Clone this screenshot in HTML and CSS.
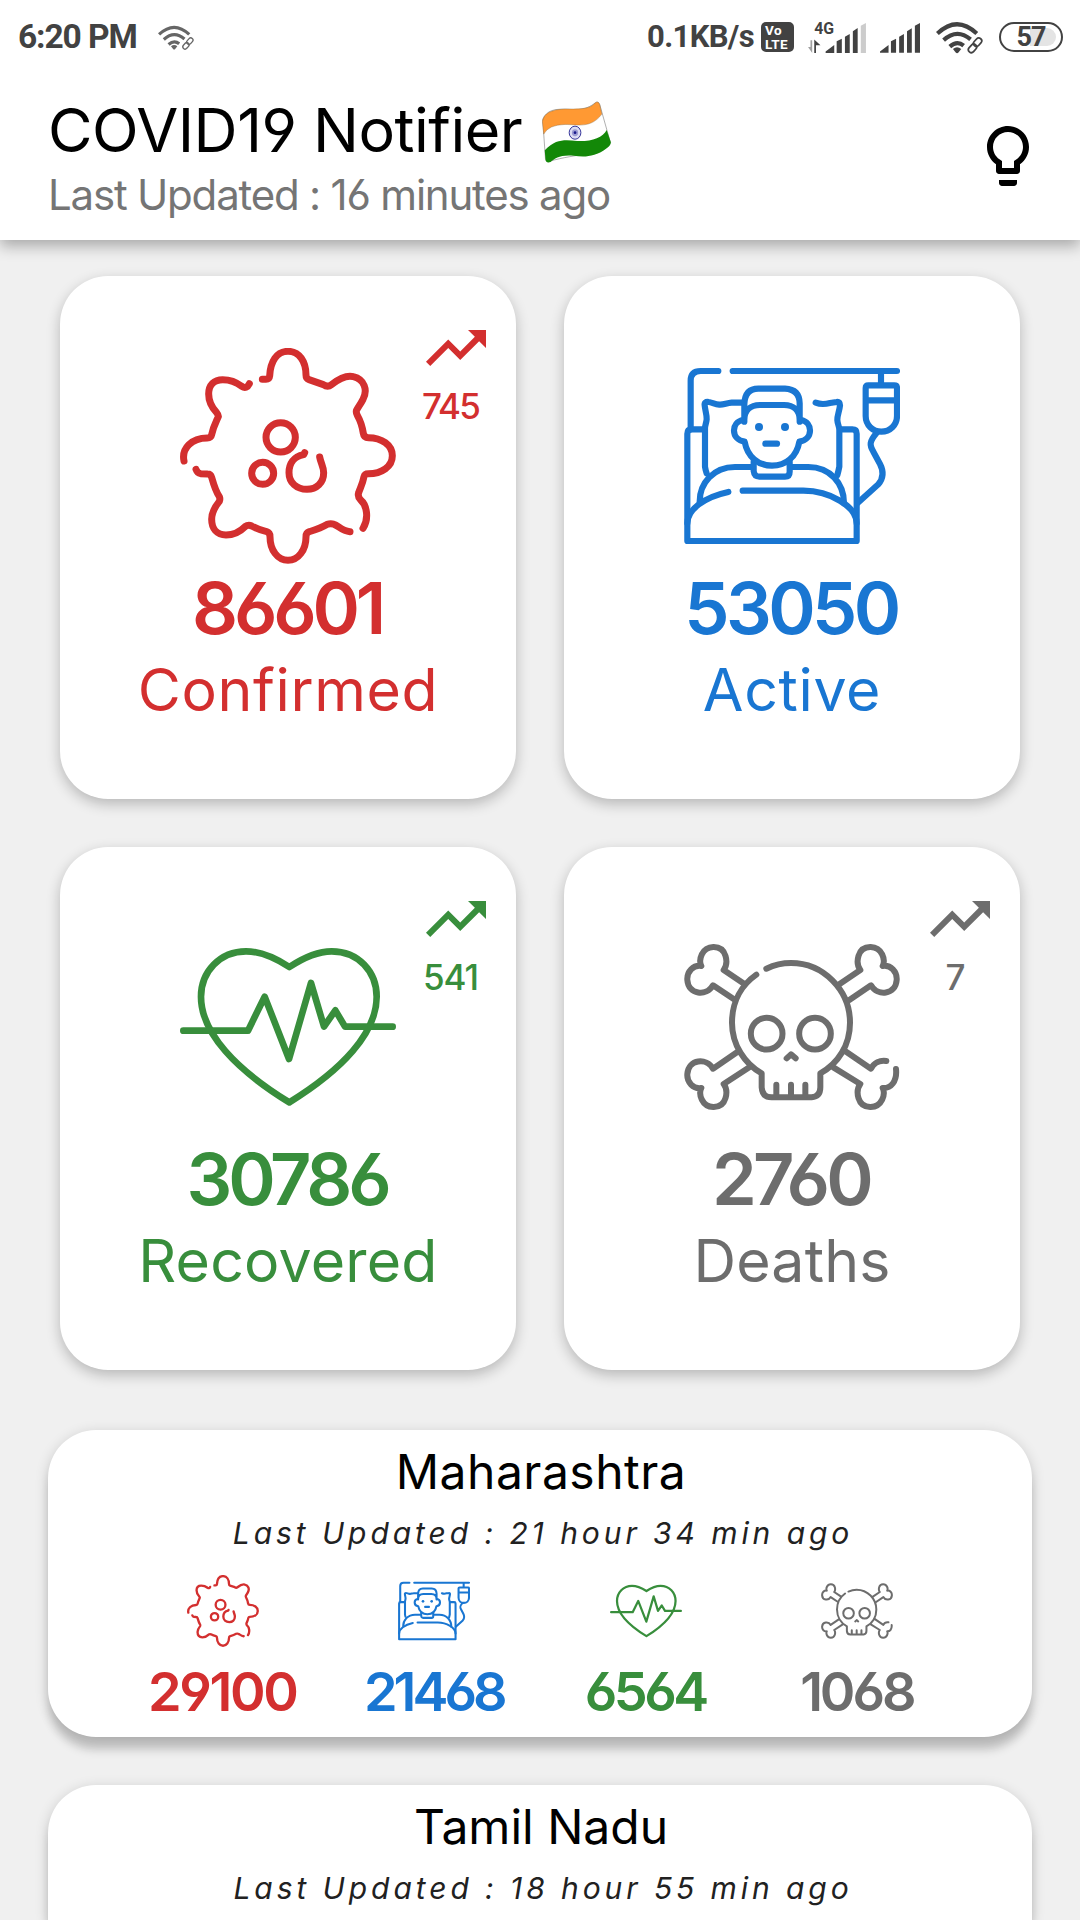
FILE: index.html
```html
<!DOCTYPE html>
<html lang="en">
<head>
<meta charset="utf-8">
<title>COVID19 Notifier</title>
<link rel="stylesheet" href="styles.css">
</head>
<body>
<svg class="sprite" aria-hidden="true">
  <symbol id="virus" viewBox="60 84 648 648">
    <g fill="none" stroke="currentColor" stroke-width="21" stroke-linecap="round" stroke-linejoin="round">
      <path d="M307 178H318Q328 178 329 168C331 125 350 94 384 94C418 94 438 125 438 165Q438 176 447 179L490 194Q503 203 514 194C545 170 565 166 580 170C613 178 624 210 609 238C602 252 594 262 590 270Q587 277 592 286C600 300 606 315 610 340Q612 353 625 353C665 353 697 375 697 407C697 440 665 461 625 461Q614 461 612 470C608 492 600 505 596 518Q592 530 602 540C620 555 628 595 609 625"/>
      <path d="M570 635C545 633 535 617 522 613Q512 609 502 613C482 625 468 629 448 635Q438 638 438 650C438 690 415 721 384 721C353 721 330 690 330 650Q330 638 320 635C300 631 290 626 275 618Q265 613 255 620C235 640 215 645 198 645C170 645 155 625 155 598C155 575 165 560 178 544Q181 537 178 530C168 515 162 497 155 472Q152 462 143 462L122 461Q112 459 108 448"/>
      <path d="M72 423C64 385 95 354 142 354Q153 354 155 344C160 320 166 310 175 290Q176 285 170 278C155 262 146 240 146 222C146 195 162 179 188 179C215 179 230 187 245 199Q260 208 268 191"/>
      <circle cx="362" cy="352" r="44"/>
      <circle cx="308" cy="460" r="33"/>
      <path d="M434 398L431 404C400 410 387 432 387 458C387 488 410 508 441 508C470 508 491 488 491 458C491 440 483 432 479 411"/>
    </g>
  </symbol>
  <symbol id="bed" viewBox="72 24 648 648">
    <g fill="none" stroke="currentColor" stroke-width="18.5" stroke-linecap="round" stroke-linejoin="round">
      <path d="M92 268V122Q92 93 122 93H175M218 93H711M663 93V130"/>
      <path d="M625 136H703Q711 136 711 144V228C711 255 690 275 664 275C638 275 617 255 617 228V144Q617 136 625 136ZM617 181H711"/>
      <path d="M649 280C628 305 628 315 640 335L660 372C672 395 670 415 655 433L592 490"/>
      <path d="M130 268H95Q82 268 82 281V603H590V281Q590 268 577 268H542"/>
      <path d="M248 188H215C200 189 190 195 178 194C165 193 155 187 146 186Q132 184 134 196C135 210 141 225 140 238C139 250 135 255 135 265V380Q137 392 140 400"/>
      <path d="M467 188C485 195 495 193 510 189L530 186Q540 184 540 196C538 215 531 228 532 240C533 255 538 258 538 270V380Q535 395 532 405"/>
      <path d="M119 485C119 430 160 381 225 381H275M395 381H445C510 381 552 430 552 490"/>
      <path d="M281 365V393Q283 410 298 410H375Q389 410 389 395V365"/>
      <path d="M205 456C130 472 82 510 82 550M248 452H430C510 452 590 500 590 550"/>
      <path d="M253 245V192Q255 146 295 146H375Q418 148 419 190V245M253 240C253 212 270 195 300 195H372C402 195 419 212 419 240"/>
      <path d="M250 240C212 245 212 300 254 305C262 350 295 377 336 377C378 377 410 350 418 305C460 300 460 245 422 240"/>
      <path d="M316 311H351"/>
    </g>
    <circle cx="297" cy="261" r="12" fill="currentColor"/>
    <circle cx="375" cy="261" r="12" fill="currentColor"/>
  </symbol>
  <symbol id="heart" viewBox="60 117 648 648">
    <g fill="none" stroke="currentColor" stroke-width="20" stroke-linecap="round" stroke-linejoin="round">
      <path d="M388 261C340 230 300 214 258 214C180 214 123 275 123 350C123 460 230 570 388 667C545 570 650 460 650 350C650 275 595 214 515 214C475 214 435 230 388 261Z"/>
      <path d="M70 452H264L314 350L387 537L453 309L492 440L526 391L555 440H698"/>
    </g>
  </symbol>
  <symbol id="skull" viewBox="72 117 648 648">
    <g fill="none" stroke="currentColor" stroke-width="18" stroke-linecap="round" stroke-linejoin="round">
      <path d="M289 284C245 315 216 365 216 428C216 495 255 552 305 580V622Q307 652 335 652H455Q481 650 481 622V580C535 550 570 495 570 428C570 330 490 249 393 249C365 249 340 256 319 266"/>
      <circle cx="320" cy="461" r="47.500"/>
      <circle cx="465" cy="461" r="47.500"/>
      <path d="M380 535L393 523L407 535M349 614V645M393 614V645M436 614V645"/>
      <path d="M250 310L191 270C206 250 201 200 160 201C125 202 115 240 124 258C100 254 80 275 82 300C85 345 140 350 159 316L222 358"/>
      <path d="M539 312L601 270C586 250 591 200 632 201C667 202 677 240 668 258C692 254 712 275 710 300C707 345 652 350 633 316L568 360"/>
      <path d="M268 562L191 612C206 632 201 682 160 681C125 680 115 642 124 624C100 628 80 607 82 582C85 537 140 532 159 566L232 516"/>
      <path d="M520 562L601 612C586 632 591 682 632 681C667 680 677 642 668 624C692 626 712 605 708 567M554 512L633 566C642 548 660 540 679 543"/>
    </g>
  </symbol>
  <symbol id="trend" viewBox="0 0 24 24">
    <path fill="currentColor" d="M16 6l2.290 2.290-4.880 4.880-4-4L2 16.590 3.410 18l6-6 4 4 6.300-6.290L22 12V6z"/>
  </symbol>
  <symbol id="wifi" viewBox="1150 60 136 95">
    <g fill="none" stroke="currentColor" stroke-width="12">
      <path d="M1154 96Q1211 42 1268 96M1172 115Q1211 80 1250 113M1190 134Q1211 115 1230 131"/>
      <g stroke-width="5" transform="rotate(-48 1263 130)">
        <rect x="1238" y="122" width="27" height="17" rx="8.500"/>
        <rect x="1261" y="121" width="27" height="17" rx="8.500"/>
      </g>
    </g>
    <path fill="currentColor" d="M1199 141Q1211 130 1223 141L1215 151Q1211 155 1207 151Z"/>
  </symbol>
</svg>

<div class="status-bar">
  <span class="clock">6:20 PM</span>
  <svg class="wifi-small"><use href="#wifi"/></svg>
  <span class="speed">0.1KB/s</span>
  <span class="volte"><span class="vo">Vo</span><span class="lte">LTE</span></span>
  <svg class="signal-data" viewBox="779 40 168 112">
    <text x="797" y="94" class="net">4G</text>
    <path fill="#a0a0a0" d="M786 113H791V150L779 133H786Z"/>
    <path fill="#424242" d="M797 150H802V128H815L797 111Z"/>
    <path fill="#424242" d="M830 150V146L855 127V150ZM862 150V116L877 109V150ZM886 150V103L900 95V150ZM909 150V87L923 78V150Z"/>
    <path fill="#ccc" d="M932 150V71L947 63V150Z"/>
  </svg>
  <svg class="signal" viewBox="830 40 117 112">
    <path fill="#424242" d="M830 150V146L855 127V150ZM862 150V116L877 109V150ZM886 150V103L900 95V150ZM909 150V87L923 78V150ZM932 150V71L947 63V150Z"/>
  </svg>
  <svg class="wifi"><use href="#wifi"/></svg>
  <span class="battery"><span class="charge"></span><span class="level">57</span></span>
</div>

<header class="app-bar">
  <div class="titles">
    <h1 class="title">COVID19 Notifier
      <svg class="flag" viewBox="8 303 202 180">
        <path fill="#fff" stroke="#666" stroke-width="1.500" d="M10 356C25 322 60 326 100 328C135 328 150 318 163 308Q172 302 176 314L207 424C180 460 110 455 30 478Q20 483 18 470Z"/>
        <path fill="#ff9933" stroke="#7a5a30" stroke-width="1" d="M9 362Q15 327 75 326C110 326 145 329 162 309Q172 301 176 314L182 341C150 384 110 371 75 371Q27 372 13 399Z"/>
        <path fill="#138808" d="M16 446C50 410 80 417 110 419C150 421 185 410 196 387L208 422Q209 431 195 441C160 467 130 466 100 462C62 458 45 470 33 480Q20 485 18 472Z"/>
        <ellipse cx="104" cy="395" rx="17" ry="19" fill="#dcdcf2" stroke="#1a1a8c" stroke-width="2.500"/>
        <ellipse cx="104" cy="395" rx="9" ry="10" fill="#9a9ad2"/>
        <circle cx="104" cy="395" r="4" fill="#1a1a8c"/>
      </svg>
    </h1>
    <p class="subtitle">Last Updated : 16 minutes ago</p>
  </div>
  <svg class="bulb" viewBox="0 0 24 24"><path d="M9 21c0 .550.450 1 1 1h4c.550 0 1-.450 1-1v-1H9v1zm3-19C8.140 2 5 5.140 5 9c0 2.380 1.190 4.470 3 5.740V17c0 .550.450 1 1 1h6c.550 0 1-.450 1-1v-2.260c1.810-1.270 3-3.360 3-5.740 0-3.860-3.140-7-7-7zm2.850 11.100l-.850.600V16h-4v-2.300l-.850-.600C7.800 12.160 7 10.630 7 9c0-2.760 2.240-5 5-5s5 2.240 5 5c0 1.630-.800 3.160-2.150 4.100z"/></svg>
</header>

<main class="content">
  <section class="metrics">
    <article class="metric confirmed">
      <div class="delta"><svg class="trend"><use href="#trend"/></svg><span class="delta-value">745</span></div>
      <svg class="metric-icon"><use href="#virus"/></svg>
      <div class="count">86601</div>
      <div class="label">Confirmed</div>
    </article>
    <article class="metric active">
      <svg class="metric-icon"><use href="#bed"/></svg>
      <div class="count">53050</div>
      <div class="label">Active</div>
    </article>
    <article class="metric recovered">
      <div class="delta"><svg class="trend"><use href="#trend"/></svg><span class="delta-value">541</span></div>
      <svg class="metric-icon"><use href="#heart"/></svg>
      <div class="count">30786</div>
      <div class="label">Recovered</div>
    </article>
    <article class="metric deaths">
      <div class="delta"><svg class="trend"><use href="#trend"/></svg><span class="delta-value">7</span></div>
      <svg class="metric-icon"><use href="#skull"/></svg>
      <div class="count">2760</div>
      <div class="label">Deaths</div>
    </article>
  </section>

  <section class="state">
    <h2 class="state-name">Maharashtra</h2>
    <p class="state-updated">Last Updated : 21 hour 34 min ago</p>
    <div class="state-counts">
      <div class="stat confirmed"><svg class="stat-icon"><use href="#virus"/></svg><span class="stat-value">29100</span></div>
      <div class="stat active"><svg class="stat-icon"><use href="#bed"/></svg><span class="stat-value">21468</span></div>
      <div class="stat recovered"><svg class="stat-icon"><use href="#heart"/></svg><span class="stat-value">6564</span></div>
      <div class="stat deaths"><svg class="stat-icon"><use href="#skull"/></svg><span class="stat-value">1068</span></div>
    </div>
  </section>

  <section class="state next">
    <h2 class="state-name">Tamil Nadu</h2>
    <p class="state-updated">Last Updated : 18 hour 55 min ago</p>
  </section>
</main>
</body>
</html>
```
FILE: styles.css
```css
* { box-sizing: border-box; margin: 0; padding: 0; }

body {
  display: flex;
  flex-direction: column;
  width: 1080px;
  height: 1920px;
  overflow: hidden;
  background: #f0f0f0;
  font-family: Inter, "Liberation Sans", sans-serif;
  font-feature-settings: "cv03", "cv04";
}

svg { display: block; flex: none; }
.sprite { width: 0; height: 0; position: absolute; }

/* Status bar */
.status-bar {
  display: flex;
  align-items: center;
  flex: none;
  height: 74px;
  padding: 0 17px 0 18px;
  background: #fff;
  color: #424242;
  font-family: Roboto, sans-serif;
  font-weight: 700;
  position: relative;
  z-index: 2;
}
.clock { font-size: 33.500px; line-height: 40px; letter-spacing: -1.100px; }
.wifi-small { width: 36px; height: 27px; margin-left: 21px; color: #666; }
.speed { margin-left: auto; font-size: 31px; line-height: 40px; letter-spacing: -0.650px; }
.volte {
  display: flex;
  flex-direction: column;
  width: 33px;
  height: 30px;
  margin: 0 14px 0 7px;
  padding: 1px 3px 0 4px;
  border-radius: 5px;
  background: #424242;
  color: #fff;
  font-family: Roboto, sans-serif;
  font-size: 13.500px;
  line-height: 14px;
  letter-spacing: 0.400px;
}
.signal-data { width: 58px; height: 38.600px; margin: 0 14px 6px 0; }
.net { font-family: Roboto, sans-serif; font-size: 46px; font-weight: 700; fill: #424242; }
.signal { width: 40px; height: 38.600px; margin: 0 16px 6px 0; }
.wifi { width: 47px; height: 33px; margin-right: 16px; }
.battery {
  display: flex;
  align-items: center;
  justify-content: center;
  position: relative;
  width: 64px;
  height: 30px;
  border: 2px solid #424242;
  border-radius: 15px;
}
.charge {
  position: absolute;
  top: 4px;
  right: 5px;
  bottom: 4px;
  width: 26px;
  border-radius: 0 9px 9px 0;
  background: #e4e4e4;
}
.level { position: relative; font-size: 27px; line-height: 26px; letter-spacing: -1px; }

/* App bar */
.app-bar {
  display: flex;
  align-items: flex-start;
  justify-content: space-between;
  flex: none;
  height: 166px;
  padding: 23px 36px 0 48px;
  background: #fff;
  box-shadow: 0 6px 14px rgba(0, 0, 0, 0.300);
  position: relative;
  z-index: 1;
}
.title {
  display: flex;
  align-items: center;
  gap: 20px;
  height: 66px;
  font-size: 61px;
  font-weight: 400;
  line-height: 66px;
  letter-spacing: -0.500px;
}
.flag { width: 69.500px; height: 62px; margin-top: 4px; }
.subtitle {
  margin-top: -1px;
  color: #757575;
  font-size: 42px;
  line-height: 66px;
  letter-spacing: -1.200px;
}
.bulb { width: 72px; height: 72px; margin-top: 23px; }

.confirmed { color: #d32f2f; }
.active { color: #1976d2; }
.recovered { color: #388e3c; }
.deaths { color: #6d6d6d; }

/* National totals */
.content { padding-top: 36px; }
.metrics {
  display: grid;
  grid-template-columns: 456px 456px;
  gap: 48px;
  justify-content: center;
}
.metric {
  display: flex;
  flex-direction: column;
  align-items: center;
  position: relative;
  height: 523px;
  padding-top: 72px;
  border-radius: 48px;
  background: #fff;
  box-shadow: 0 5px 14px rgba(0, 0, 0, 0.240);
}
.metric-icon { width: 216px; height: 216px; }
.count {
  margin-top: 4px;
  padding-right: 2px;
  font-size: 72px;
  font-weight: 560;
  line-height: 80px;
  letter-spacing: -4.200px;
}
.active .count { letter-spacing: -3.600px; }
.deaths .count { letter-spacing: -3.800px; }
.label {
  margin-top: 12px;
  font-size: 59px;
  line-height: 60px;
  letter-spacing: 0.650px;
}
.recovered .label { letter-spacing: 0.200px; }
.deaths .label { letter-spacing: 0.200px; }
.delta {
  display: flex;
  flex-direction: column;
  align-items: center;
  position: absolute;
  top: 36px;
  right: 24px;
}
.trend { width: 72px; height: 72px; }
.delta-value {
  padding-right: 11px;
  font-size: 35px;
  font-weight: 550;
  line-height: 44px;
  letter-spacing: -1.800px;
}
.recovered .delta-value { letter-spacing: -1px; }

/* State cards */
.state {
  height: 307px;
  margin: 60px 48px 0;
  padding-top: 12px;
  border-radius: 48px;
  background: #fff;
  text-align: center;
  box-shadow: 0 14px 10px -1px rgba(0, 0, 0, 0.170), 0 3px 14px rgba(0, 0, 0, 0.160);
}
.state.next {
  height: 135px;
  margin-top: 48px;
  border-radius: 48px 48px 0 0;
}
.state-name {
  padding-left: 2px;
  font-size: 48px;
  font-weight: 400;
  line-height: 60px;
  letter-spacing: 0.500px;
}
.next .state-name { letter-spacing: 0; }
.state-updated {
  margin-top: 11px;
  padding-left: 6px;
  color: #212121;
  font-size: 30px;
  font-style: italic;
  line-height: 40px;
  letter-spacing: 3.930px;
}
.state-counts {
  display: grid;
  grid-template-columns: repeat(4, 1fr);
  padding: 0 69px;
  margin-top: 22px;
}
.stat { display: flex; flex-direction: column; align-items: center; }
.stat-icon { width: 72px; height: 72px; }
.stat-value {
  margin-top: 17px;
  padding-right: 1px;
  font-size: 54px;
  font-weight: 560;
  line-height: 56px;
  letter-spacing: -3.500px;
}
.stat.confirmed .stat-value { letter-spacing: -2.400px; }
.stat.active .stat-value { letter-spacing: -4px; }
.stat.deaths .stat-value { letter-spacing: -3.100px; }
```
